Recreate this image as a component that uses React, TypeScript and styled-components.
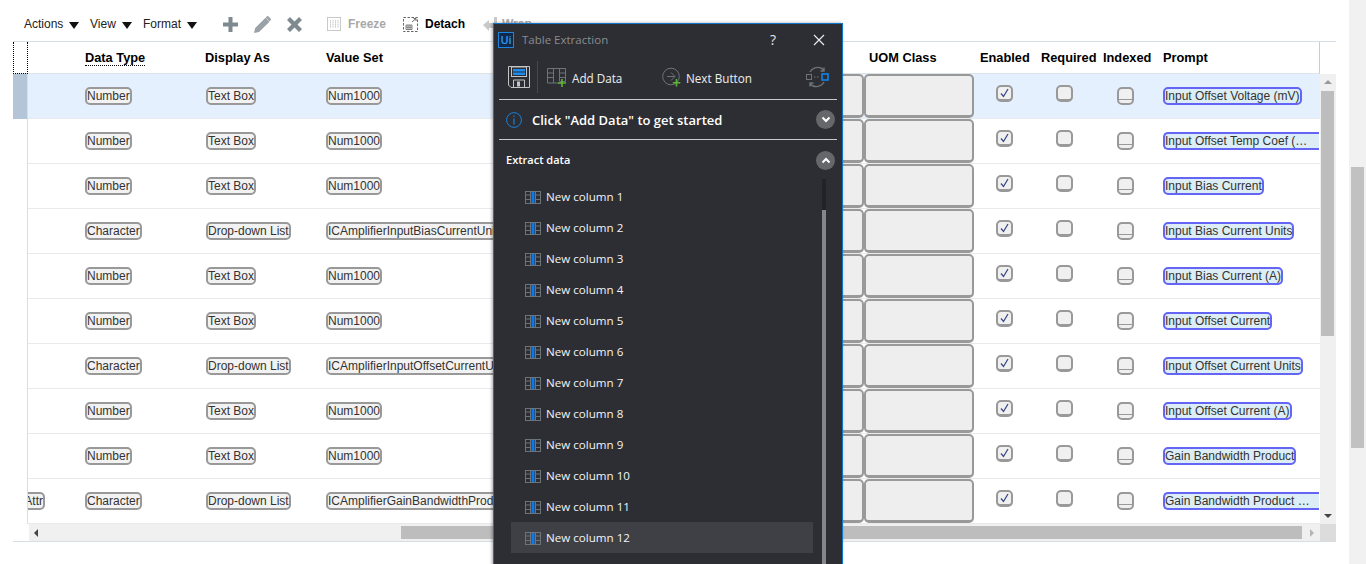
import React from "react"
import styled, { createGlobalStyle } from "styled-components"

const GlobalStyle = createGlobalStyle`
  html, body {
    margin: 0;
    padding: 0;
    height: 100%;
    overflow: hidden;
    background: #fff;
    font-family: "Liberation Sans", Arial, sans-serif;
  }
  #root { height: 100%; }
`

const COLUMNS = "15px 50px 121px 121px 300px 244px 110px 60px 61px 60px 165px"
const UI_FONT = `"Open Sans", "Noto Sans", sans-serif`

const Page = styled.div`
  position: relative;
  display: flex;
  height: 564px;
  overflow: hidden;
`
const Content = styled.main`
  width: 1323px;
  margin-left: 13px;
  flex: none;
`
const Toolbar = styled.div`
  display: flex;
  align-items: center;
  height: 41px;
  padding-top: 7px;
  box-sizing: border-box;
  margin-left: -13px;
  padding-left: 24px;
  font-size: 12px;
  color: #222;
`
const Menu = styled.span<{ $w: number }>`
  display: flex;
  align-items: center;
  width: ${(p) => p.$w}px;
  flex: none;
`
const Caret = styled.i`
  width: 0;
  height: 0;
  margin-left: 6px;
  margin-top: 2px;
  border-left: 5px solid transparent;
  border-right: 5px solid transparent;
  border-top: 7px solid #111;
`
const ToolIcon = styled.svg<{ $gap: number }>`
  flex: none;
  margin-right: ${(p) => p.$gap}px;
`
const ToolLabel = styled.span<{ $off?: boolean; $w: number }>`
  font-weight: 700;
  flex: none;
  width: ${(p) => p.$w}px;
  color: ${(p) => (p.$off ? "#a8a8a8" : "#000")};
`
const Table = styled.section`
  border-top: 1px solid #d6dfe6;
  border-bottom: 1px solid #d6dfe6;
`
const HeaderRow = styled.div`
  display: grid;
  grid-template-columns: ${COLUMNS};
  width: 1307px;
  height: 32px;
  box-sizing: border-box;
  border-bottom: 1px solid #dfe4e8;
  border-right: 1px solid #ccc;
`
const Corner = styled.div`
  border: 1px dotted #000;
  border-top: 0;
  margin-bottom: -1px;
`
const HeaderCell = styled.div<{ $inset?: number }>`
  padding-left: ${(p) => p.$inset ?? 6}px;
  padding-top: 8px;
  font-size: 12.8px;
  line-height: 15px;
  font-weight: 700;
  color: #000;
  white-space: nowrap;
`
const Sorted = styled.span`
  border-bottom: 1px dotted #000;
`
const BodyWrap = styled.div`
  display: flex;
  height: 450px;
`
const Rows = styled.div`
  width: 1307px;
  flex: none;
`
const Row = styled.div<{ $selected?: boolean }>`
  display: grid;
  grid-template-columns: ${COLUMNS};
  height: 45px;
  box-sizing: border-box;
  border-bottom: 1px solid #e8ebee;
  background: ${(p) => (p.$selected ? "#e4f0fd" : "#fff")};
`
const Selector = styled.div<{ $selected?: boolean }>`
  margin-bottom: -1px;
  border-right: 1px solid #d6dfe6;
  background: ${(p) => (p.$selected ? "#b3c5d6" : "#fff")};
`
const Cell = styled.div<{ $align?: "center" | "flex-end"; $inset?: number }>`
  position: relative;
  display: flex;
  align-items: center;
  min-width: 0;
  padding-left: ${(p) => p.$inset ?? 0}px;
  justify-content: ${(p) => p.$align ?? "flex-start"};
  overflow: hidden;
`
const Pill = styled.span`
  flex: none;
  height: 14px;
  line-height: 14px;
  font-size: 12px;
  color: #333;
  white-space: nowrap;
  background: #f2f2f2;
  border: 2px solid #999;
  border-radius: 5px;
`
const AttrPill = styled(Pill)`
  display: flex;
  justify-content: flex-end;
  width: 15px;
  overflow: hidden;
  border-left: 0;
  border-radius: 0 5px 5px 0;
`
const AttrText = styled.span`
  flex: none;
`
const BlockPill = styled.div`
  width: 110px;
  height: 44px;
  box-sizing: border-box;
  background: #eee;
  border: 2px solid #999;
  border-bottom-width: 3px;
  border-radius: 5px;
`
const Check = styled.span<{ $line?: boolean }>`
  position: relative;
  display: block;
  width: 17px;
  height: ${(p) => (p.$line ? 18 : 17)}px;
  box-sizing: border-box;
  margin-bottom: ${(p) => (p.$line ? 0 : 5)}px;
  background: #f0f0f0;
  border: 2px solid #999;
  border-bottom-width: ${(p) => (p.$line ? 2 : 3)}px;
  border-radius: 5px;
`
const CheckLine = styled.i`
  position: absolute;
  left: 0;
  right: 0;
  bottom: 3px;
  height: 1px;
  background: #999;
`
const CheckMark = styled.svg`
  display: block;
`
const PromptPill = styled.span<{ $clip?: boolean }>`
  display: block;
  flex: none;
  height: 14px;
  line-height: 14px;
  font-size: 12px;
  color: #333;
  white-space: nowrap;
  overflow: hidden;
  background: #dcedf5;
  border: 2px solid #6464f5;
  width: ${(p) => (p.$clip ? "154px" : "auto")};
  border-right-width: ${(p) => (p.$clip ? 0 : 2)}px;
  border-radius: ${(p) => (p.$clip ? "5px 0 0 5px" : "5px")};
`
const VScroll = styled.div`
  position: relative;
  width: 16px;
  flex: none;
  background: #f0f0f0;
`
const VThumb = styled.div`
  position: absolute;
  top: 17px;
  left: 1px;
  width: 13px;
  height: 245px;
  background: #bdbdbd;
`
const ArrowUp = styled.i`
  position: absolute;
  top: 6px;
  left: 4px;
  border-left: 4px solid transparent;
  border-right: 4px solid transparent;
  border-bottom: 4px solid #9a9a9a;
`
const ArrowDown = styled.i`
  position: absolute;
  bottom: 6px;
  left: 4px;
  border-left: 4px solid transparent;
  border-right: 4px solid transparent;
  border-top: 4px solid #444;
`
const HScrollRow = styled.div`
  display: flex;
  height: 17px;
  padding-left: 16px;
`
const HTrack = styled.div`
  position: relative;
  width: 1291px;
  background: #f0f0f0;
`
const HThumb = styled.div`
  position: absolute;
  top: 2px;
  left: 372px;
  width: 901px;
  height: 13px;
  background: #bdbdbd;
`
const ArrowLeft = styled.i`
  position: absolute;
  top: 5px;
  left: 5px;
  border-top: 4px solid transparent;
  border-bottom: 4px solid transparent;
  border-right: 4px solid #444;
`
const ArrowRight = styled.i`
  position: absolute;
  top: 5px;
  right: 6px;
  border-top: 4px solid transparent;
  border-bottom: 4px solid transparent;
  border-left: 4px solid #b5b5b5;
`
const ScrollCorner = styled.div`
  width: 16px;
  background: #dcdcdc;
`
const PageScroll = styled.div`
  position: relative;
  margin-left: 13px;
  width: 17px;
  flex: none;
  background: #f1f1f1;
`
const PageThumb = styled.div`
  position: absolute;
  top: 167px;
  left: 2px;
  width: 13px;
  height: 281px;
  background: #c1c1c1;
`

/* floating UiPath window */
const Win = styled.aside`
  position: absolute;
  left: 493px;
  top: 23px;
  width: 350px;
  height: 560px;
  box-sizing: border-box;
  background: #2d2e33;
  border: 1px solid #1273c9;
  border-bottom: 0;
  font-family: ${UI_FONT};
  color: #fff;
  box-shadow: -1px 0 3px rgba(0, 0, 0, 0.35);
`
const TitleBar = styled.header`
  display: flex;
  align-items: center;
  height: 31px;
  padding-left: 4px;
`
const Logo = styled.span`
  width: 16px;
  height: 16px;
  box-sizing: border-box;
  border: 1px solid #1a86e0;
  background: #10284a;
  color: #2f9cf4;
  font-size: 11px;
  line-height: 14px;
  text-align: center;
  font-weight: 600;
`
const Title = styled.span`
  margin-left: 8px;
  width: 248px;
  font-size: 11.5px;
  color: #8a8c90;
`
const Help = styled.span`
  width: 43px;
  font-size: 14px;
  color: #e8e8e8;
`
const IconRow = styled.div`
  display: flex;
  align-items: center;
  height: 44px;
  margin: 0 5px;
  padding-left: 9px;
  border-bottom: 1px solid #c9c9c9;
`
const Divider = styled.i`
  width: 1px;
  height: 32px;
  margin: 0 9px 0 7px;
  background: #46484d;
`
const ActionLabel = styled.span<{ $w: number }>`
  width: ${(p) => p.$w}px;
  margin-left: 5px;
  margin-top: 1px;
  font-size: 11.7px;
  color: #eee;
`
const InfoRow = styled.div`
  display: flex;
  align-items: center;
  height: 39px;
  margin: 0 5px;
  padding: 0 2px 0 7px;
  border-bottom: 1px solid #c9c9c9;
`
const InfoText = styled.span`
  flex: 1;
  margin-left: 10px;
  font-size: 13px;
  font-weight: 600;
  white-space: nowrap;
`
const RoundToggle = styled.span`
  display: flex;
  align-items: center;
  justify-content: center;
  width: 19px;
  height: 19px;
  border-radius: 50%;
  background: #66676b;
  flex: none;
`
const SectionRow = styled.div`
  display: flex;
  align-items: center;
  height: 41px;
  margin: 0 2px 0 12px;
  padding-right: 5px;
`
const SectionTitle = styled.span`
  flex: 1;
  margin-bottom: 2px;
  font-size: 11px;
  font-weight: 600;
`
const ListArea = styled.div`
  position: relative;
  padding-left: 17px;
`
const Item = styled.div<{ $active?: boolean }>`
  display: flex;
  align-items: center;
  width: 302px;
  height: 31px;
  padding-left: 14px;
  box-sizing: border-box;
  font-size: 11.6px;
  color: #f4f4f4;
  background: ${(p) => (p.$active ? "#3f4046" : "transparent")};
`
const ItemLabel = styled.span`
  margin-left: 5px;
  white-space: nowrap;
`
const ListTrack = styled.div`
  position: absolute;
  top: -2px;
  left: 328px;
  width: 4px;
  height: 400px;
  background: #222326;
`
const ListThumb = styled.div`
  position: absolute;
  top: 31px;
  left: 0;
  width: 4px;
  height: 360px;
  background: #85868a;
`

const Chevron = ({ up }: { up?: boolean }) => (
  <svg width="10" height="7" viewBox="0 0 10 7">
    <path d={up ? "M1.5 5.5 5 2l3.5 3.5" : "M1.5 1.5 5 5l3.5-3.5"} fill="none" stroke="#fff" strokeWidth="2" />
  </svg>
)

const ColumnIcon = () => (
  <svg width="16" height="14" viewBox="0 0 16 14" fill="none">
    <rect x="0.5" y="1.5" width="15" height="12" stroke="#6d7478" />
    <path d="M5.5 1.5v12M10.5 1.5v12M.5 5h5M.5 9.5h5M10.5 5h5M10.5 9.5h5" stroke="#6d7478" />
    <rect x="6.5" y="2" width="3" height="11" fill="#0e78e8" />
  </svg>
)

type RowData = {
  type: "Number" | "Character"
  value: string
  prompt: string
  clip?: boolean
  attr?: boolean
}

const num = (prompt: string, clip?: boolean): RowData => ({ type: "Number", value: "Num1000", prompt, clip })

const rows: RowData[] = [
  num("Input Offset Voltage (mV)"),
  num("Input Offset Temp Coef (…", true),
  num("Input Bias Current"),
  { type: "Character", value: "ICAmplifierInputBiasCurrentUnits", prompt: "Input Bias Current Units" },
  num("Input Bias Current (A)"),
  num("Input Offset Current"),
  { type: "Character", value: "ICAmplifierInputOffsetCurrentUnits", prompt: "Input Offset Current Units" },
  num("Input Offset Current (A)"),
  num("Gain Bandwidth Product"),
  {
    type: "Character",
    value: "ICAmplifierGainBandwidthProductUnits",
    prompt: "Gain Bandwidth Product …",
    clip: true,
    attr: true,
  },
]

const columnsList = Array.from({ length: 12 }, (_, i) => `New column ${i + 1}`)

const App = () => {
  return (
    <Page>
      <GlobalStyle />
      <Content>
        <Toolbar>
          <Menu $w={66}>Actions<Caret /></Menu>
          <Menu $w={53}>View<Caret /></Menu>
          <Menu $w={80}>Format<Caret /></Menu>
          <ToolIcon $gap={16} width="15" height="15" viewBox="0 0 15 15">
            <path d="M5.5 0h4v5.5H15v4H9.5V15h-4V9.5H0v-4h5.5z" fill="#7f8a90" />
          </ToolIcon>
          <ToolIcon $gap={16} width="17" height="17" viewBox="0 0 17 17">
            <path d="M0 17l1.2-5L11.5 1.7l4 4L5 16zM12.6.6c.7-.7 1.4-.7 2 0l1.9 1.9c.6.6.6 1.3 0 1.9l-.9.9-3.9-3.9z" fill="#9aa2a7" />
          </ToolIcon>
          <ToolIcon $gap={25} width="15" height="15" viewBox="0 0 15 15">
            <path d="M3 0l4.5 4.5L12 0l3 3-4.5 4.5L15 12l-3 3-4.5-4.5L3 15l-3-3 4.5-4.5L0 3z" fill="#7f8a90" />
          </ToolIcon>
          <ToolIcon $gap={7} width="14" height="14" viewBox="0 0 14 14" fill="none" stroke="#c9c9c9">
            <rect x="0.5" y="0.5" width="13" height="13" />
            <path d="M3.5 3v8M6 3v8M8.5 3v8M11 3v8" strokeDasharray="1.5 0.5" />
          </ToolIcon>
          <ToolLabel $off $w={55}>Freeze</ToolLabel>
          <ToolIcon $gap={7} width="15" height="15" viewBox="0 0 15 15" fill="none" stroke="#666">
            <rect x="0.5" y="0.5" width="14" height="14" strokeDasharray="2.5 1.5" />
            <path d="M9 5l4-3.5M10.5 1.5h2.5V4" />
            <path d="M3 8h6v4.5H3zM3 10.2h6M5 8v4.5M7 8v4.5" strokeWidth="0.8" />
          </ToolIcon>
          <ToolLabel $w={58}>Detach</ToolLabel>
          <ToolIcon $gap={5} width="14" height="14" viewBox="0 0 14 14">
            <path d="M0 8l6-5v3h5V0h3v11H6v3z" fill="#c9c9c9" />
          </ToolIcon>
          <ToolLabel $off $w={40}>Wrap</ToolLabel>
        </Toolbar>
        <Table>
          <HeaderRow>
            <Corner />
            <HeaderCell />
            <HeaderCell $inset={7}><Sorted>Data Type</Sorted></HeaderCell>
            <HeaderCell $inset={6}>Display As</HeaderCell>
            <HeaderCell $inset={6}>Value Set</HeaderCell>
            <HeaderCell />
            <HeaderCell $inset={5}>UOM Class</HeaderCell>
            <HeaderCell $inset={6}>Enabled</HeaderCell>
            <HeaderCell $inset={7}>Required</HeaderCell>
            <HeaderCell $inset={8}>Indexed</HeaderCell>
            <HeaderCell $inset={8}>Prompt</HeaderCell>
          </HeaderRow>
          <BodyWrap>
            <Rows>
              {rows.map((r, i) => (
                <Row key={i} $selected={i === 0}>
                  <Selector $selected={i === 0} />
                  <Cell>{r.attr && <AttrPill><AttrText>Attr</AttrText></AttrPill>}</Cell>
                  <Cell $inset={7}><Pill>{r.type}</Pill></Cell>
                  <Cell $inset={7}><Pill>{r.type === "Number" ? "Text Box" : "Drop-down List"}</Pill></Cell>
                  <Cell $inset={6}><Pill>{r.value}</Pill></Cell>
                  <Cell $align="flex-end"><BlockPill /></Cell>
                  <Cell><BlockPill /></Cell>
                  <Cell $align="center">
                    <Check>
                      <CheckMark width="13" height="12" viewBox="0 0 13 12">
                        <path d="M3 6.5 5.5 9.5 10 2" fill="none" stroke="#3b4a86" strokeWidth="1.3" />
                      </CheckMark>
                    </Check>
                  </Cell>
                  <Cell $align="center"><Check /></Cell>
                  <Cell $align="center"><Check $line><CheckLine /></Check></Cell>
                  <Cell $inset={8}>
                    <PromptPill $clip={r.clip}>{r.prompt}</PromptPill>
                  </Cell>
                </Row>
              ))}
            </Rows>
            <VScroll>
              <ArrowUp />
              <VThumb />
              <ArrowDown />
            </VScroll>
          </BodyWrap>
          <HScrollRow>
            <HTrack>
              <ArrowLeft />
              <HThumb />
              <ArrowRight />
            </HTrack>
            <ScrollCorner />
          </HScrollRow>
        </Table>
      </Content>
      <PageScroll>
        <PageThumb />
      </PageScroll>

      <Win>
        <TitleBar>
          <Logo>Ui</Logo>
          <Title>Table Extraction</Title>
          <Help>?</Help>
          <svg width="12" height="12" viewBox="0 0 12 12">
            <path d="M1 1l10 10M11 1 1 11" stroke="#eee" strokeWidth="1.1" fill="none" />
          </svg>
        </TitleBar>
        <IconRow>
          <svg width="22" height="22" viewBox="0 0 22 22" fill="none">
            <path d="M.5.5h21v21H3L.5 19z" stroke="#c4c4c4" />
            <rect x="3.5" y="1" width="15" height="9.5" stroke="#c4c4c4" />
            <path d="M5 3h12v2.5H5zM5 6.5h12V9H5z" fill="#1a8cf0" />
            <path d="M5.5 21v-7h11v7" stroke="#c4c4c4" />
            <rect x="9" y="15.5" width="3" height="5" fill="#c4c4c4" />
          </svg>
          <Divider />
          <svg width="20" height="20" viewBox="0 0 20 20" fill="none">
            <path d="M.5 1.5h18v13h-5V16H.5zM6.5 1.5V16M12.5 1.5v13M.5 6h6M.5 10.5h6M12.5 6h6M12.5 10.5h6" stroke="#6d7478" />
            <path d="M15 12v8M11 16h8" stroke="#5fb336" strokeWidth="1.6" />
          </svg>
          <ActionLabel $w={90}>Add Data</ActionLabel>
          <svg width="19" height="20" viewBox="0 0 19 20" fill="none">
            <circle cx="9" cy="9.5" r="8.3" stroke="#6d7478" />
            <path d="M5 9.5h7.5M9 5.5l4 4-4 4" stroke="#6d7478" />
            <path d="M14.5 12v7.5M10.8 15.8h7.5" stroke="#5fb336" strokeWidth="1.6" />
          </svg>
          <ActionLabel $w={120}>Next Button</ActionLabel>
          <svg width="23" height="22" viewBox="0 0 23 22" fill="none">
            <path d="M4 6C6 2 11 0 16 2.5L18 5M18 1.5V5H14.5" stroke="#6d7478" strokeWidth="1.4" />
            <path d="M18 16C16 20 11 22 6 19.5L4 17M4 20.5V17H7.5" stroke="#6d7478" strokeWidth="1.4" />
            <rect x="0.5" y="8.5" width="5" height="5" stroke="#6d7478" />
            <path d="M8 11h1.5M11 11h1.5" stroke="#6d7478" />
            <rect x="16" y="8" width="6" height="6" stroke="#1185e8" strokeWidth="1.6" />
          </svg>
        </IconRow>
        <InfoRow>
          <svg width="16" height="16" viewBox="0 0 16 16" fill="none">
            <circle cx="8" cy="8" r="7.4" stroke="#1a7fd8" />
            <path d="M8 6.5v6M8 3.5V5" stroke="#1a7fd8" strokeWidth="1.2" />
          </svg>
          <InfoText>Click "Add Data" to get started</InfoText>
          <RoundToggle><Chevron /></RoundToggle>
        </InfoRow>
        <SectionRow>
          <SectionTitle>Extract data</SectionTitle>
          <RoundToggle><Chevron up /></RoundToggle>
        </SectionRow>
        <ListArea>
          {columnsList.map((name, i) => (
            <Item key={name} $active={i === 11}>
              <ColumnIcon />
              <ItemLabel>{name}</ItemLabel>
            </Item>
          ))}
          <ListTrack>
            <ListThumb />
          </ListTrack>
        </ListArea>
      </Win>
    </Page>
  )
}

export default App
